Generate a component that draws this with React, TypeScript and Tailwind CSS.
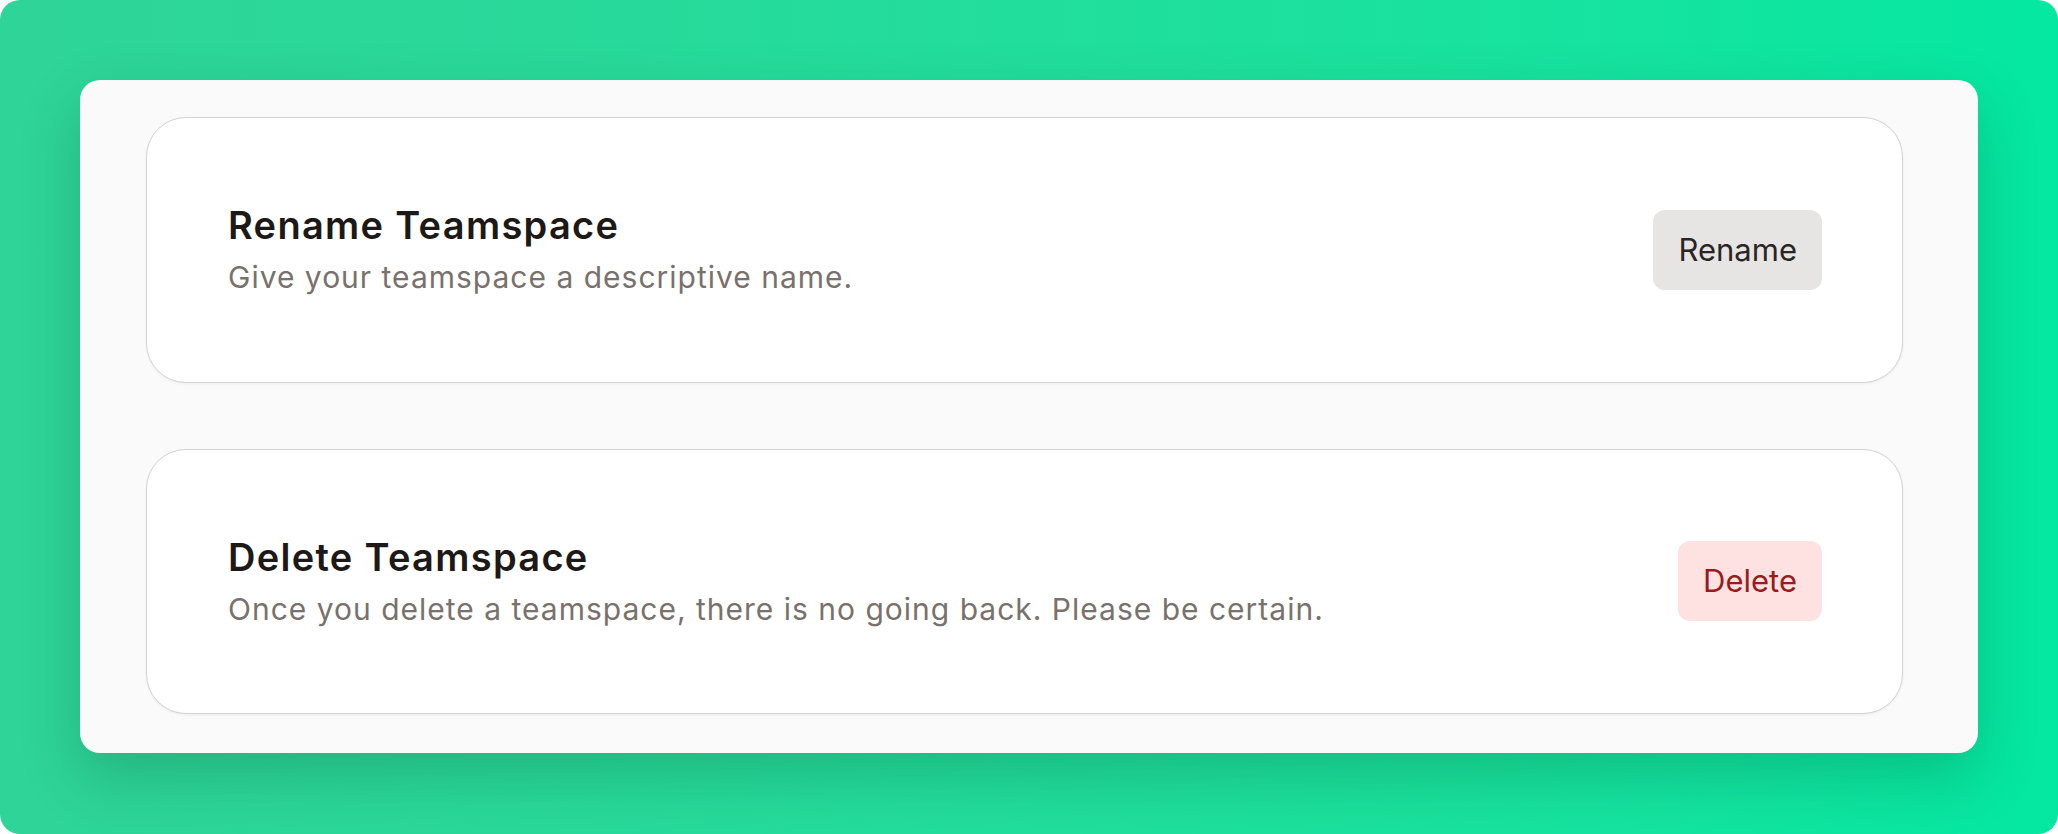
type SettingRow = {
  title: string
  description: string
  action: string
  danger?: boolean
}

const rows: SettingRow[] = [
  {
    title: 'Rename Teamspace',
    description: 'Give your teamspace a descriptive name.',
    action: 'Rename',
  },
  {
    title: 'Delete Teamspace',
    description: 'Once you delete a teamspace, there is no going back. Please be certain.',
    action: 'Delete',
    danger: true,
  },
]

function SettingCard({ row }: { row: SettingRow }) {
  return (
    <div className="flex h-[266px] items-center justify-between rounded-[40px] border-[1.5px] border-[#d6d3d1] bg-white pl-[81px] pr-[80px] shadow-[0_1px_3px_rgba(0,0,0,0.06)]">
      <div className="flex flex-col">
        <h3 className="text-[38px] font-semibold leading-[50px] tracking-[1.3px] text-[#1c1917]">
          {row.title}
        </h3>
        <p className="mt-[5px] text-[30px] leading-[44px] tracking-[1px] text-[#78716c]">{row.description}</p>
      </div>
      <button
        className={`h-[80px] rounded-[12px] px-[25px] text-[31px] ${
          row.danger ? 'bg-[#fee2e2] text-[#991b1b]' : 'bg-[#e7e5e4] text-[#292524]'
        }`}
      >
        {row.action}
      </button>
    </div>
  )
}

export default function App() {
  return (
    <div className="h-[834px] w-full bg-white font-['Inter',sans-serif]">
      <div className="h-full w-full rounded-[20px] bg-linear-to-r from-[#2fd498] to-[#03e8a1] pl-[80px] pr-[80px] pt-[80px]">
        <div className="flex h-[673px] flex-col gap-[66px] rounded-[20px] bg-[#fafafa] pb-[39px] pl-[66px] pr-[75px] pt-[37px] shadow-[0_24px_60px_rgba(0,60,30,0.22)]">
          {rows.map((row) => (
            <SettingCard key={row.title} row={row} />
          ))}
        </div>
      </div>
    </div>
  )
}
